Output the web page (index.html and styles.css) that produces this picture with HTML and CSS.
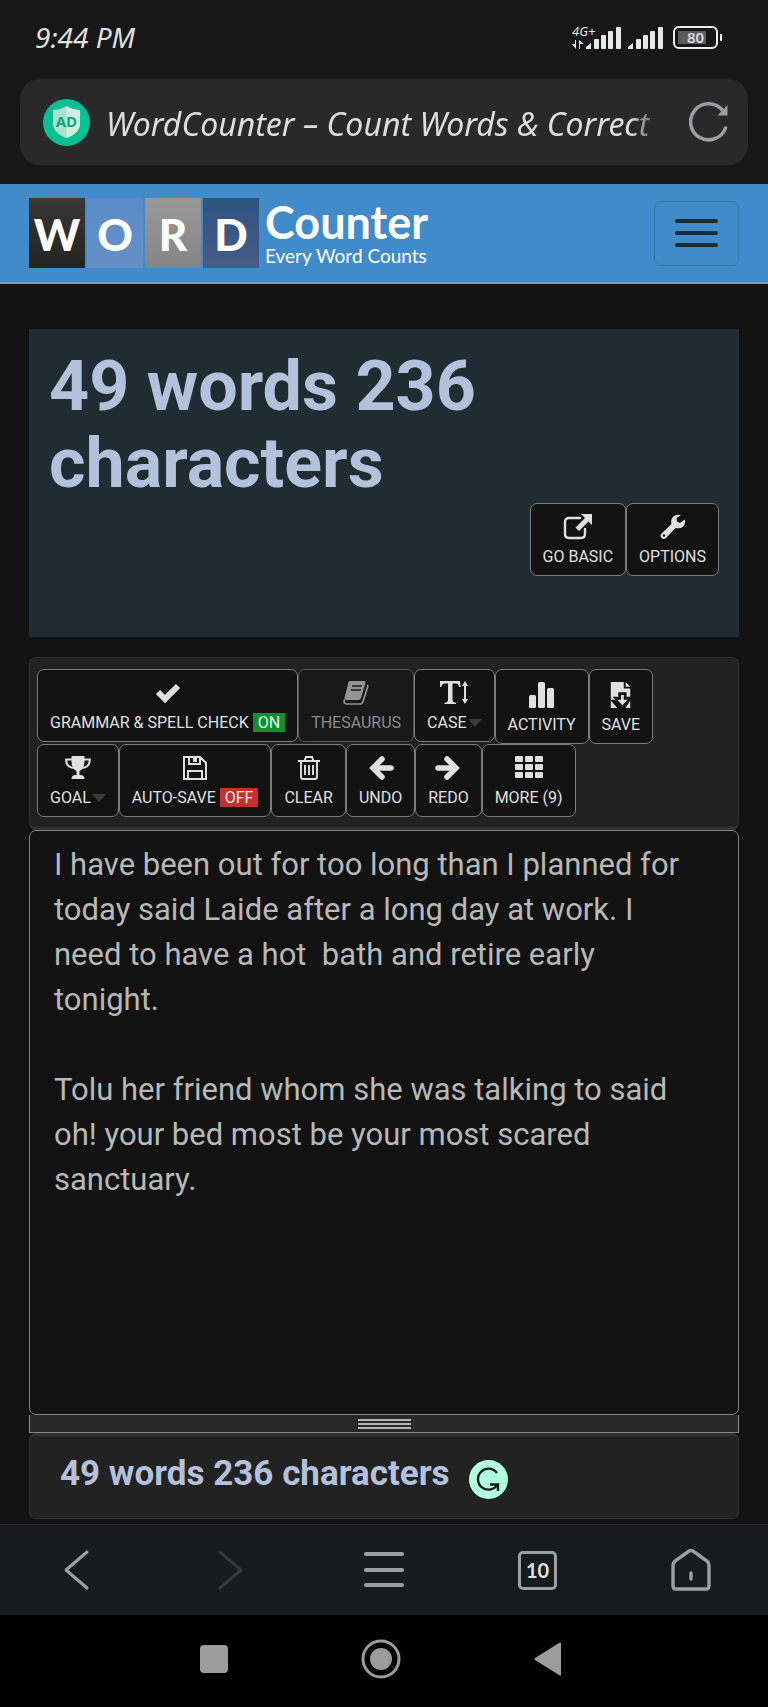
FILE: index.html
```html
<!DOCTYPE html>
<html lang="en">
<head>
<meta charset="utf-8">
<meta name="viewport" content="width=device-width, initial-scale=1">
<title>WordCounter – Count Words &amp; Correct Writing</title>
<link rel="stylesheet" href="styles.css">
</head>
<body>
<div class="status-bar">
  <time class="clock">9:44 PM</time>
  <div class="status-icons">
    <div class="network">
      <span class="network-type">4G+</span>
      <svg class="arrows" width="12" height="9" viewBox="0 0 12 9"><path d="M4 0v9L0 4h3V0zM7 9V0l5 4H8v5z" fill="#e8e8e8"/></svg>
    </div>
    <svg width="35" height="23" viewBox="0 0 35 23" fill="#e8e8e8"><path d="M0 23v-2l5-4v6z"/><rect x="8" y="13" width="5" height="10" rx="1"/><rect x="15" y="9" width="5" height="14" rx="1"/><rect x="22" y="5" width="5" height="18" rx="1"/><rect x="30" y="1" width="5" height="22" rx="1"/></svg>
    <svg class="signal-second" width="35" height="23" viewBox="0 0 35 23" fill="#e8e8e8"><path d="M0 23v-2l5-4v6z"/><rect x="8" y="13" width="5" height="10" rx="1"/><rect x="15" y="9" width="5" height="14" rx="1"/><rect x="22" y="5" width="5" height="18" rx="1"/><rect x="30" y="1" width="5" height="22" rx="1"/></svg>
    <div class="battery"><span class="battery-level">80</span></div>
  </div>
</div>

<div class="browser-top">
  <div class="address-bar">
    <span class="ad-badge">
      <svg width="47" height="47" viewBox="0 0 47 47"><circle cx="23.500" cy="23.500" r="23.500" fill="#0bbf94"/><path d="M23.500 7q6 4 13.500 4v13q0 10-13.500 15Q10 34 10 24V11q7.500 0 13.500-4z" fill="#a9e3cf"/><path d="M23.500 7q6 4 13.500 4v13q0 10-13.500 15z" fill="#cfeee2"/></svg>
      <span class="ad-label">AD</span>
    </span>
    <span class="page-title">WordCounter – Count Words &amp; Correct</span>
    <button class="reload" aria-label="Reload"><svg width="40" height="40" viewBox="0 0 40 40"><path d="M36.500 26A18 18 0 1 1 34 9" fill="none" stroke="#9c9ca2" stroke-width="3.600" stroke-linecap="round"/><path d="M38.500 3v10.500H28.500z" fill="#9c9ca2"/></svg></button>
  </div>
</div>

<header class="site-nav">
  <a class="logo" href="#" aria-label="WordCounter home">
    <span class="tile tile-w">W</span><span class="tile tile-o">O</span><span class="tile tile-r">R</span><span class="tile tile-d">D</span>
    <span class="logo-words"><span class="logo-name">Counter</span><span class="logo-tag">Every Word Counts</span></span>
  </a>
  <button class="menu-toggle" aria-label="Menu"><i></i><i></i><i></i></button>
</header>

<main class="page">
  <section class="summary">
    <h1 class="summary-title">49 words 236 characters</h1>
    <div class="summary-actions">
      <button class="tool"><svg width="30" height="26" viewBox="0 0 30 26"><path d="M17 4H6Q2 4 2 8v12q0 4 4 4h12q4 0 4-4v-5" fill="none" stroke="#e0e0e0" stroke-width="2.400" stroke-linecap="round"/><path d="M18 0h11v11l-3.500-3.500L16 17l-3.500-3.500L22 4z" fill="#e0e0e0"/></svg><span>GO BASIC</span></button>
      <button class="tool"><svg width="26" height="26" viewBox="0 0 26 26"><path d="M24.700 5.500 20 9l-3-1.500-.5-3.500 4.500-3Q15 0 12.500 3.500 10.500 6.500 11.500 10L1.500 19.500q-2 2.300 0 4.500 2.300 2 4.500 0L15.500 14q4.500 1.200 7.800-1.500 2.700-3 1.400-7z" fill="#e0e0e0"/><circle cx="4" cy="21.500" r="1.200" fill="#121212"/></svg><span>OPTIONS</span></button>
    </div>
  </section>

  <section class="editor">
    <div class="toolbar">
      <button class="tool"><svg width="26" height="26" viewBox="0 0 26 26"><path d="M3 12l7 7L23 6" fill="none" stroke="#e0e0e0" stroke-width="6"/></svg><span>GRAMMAR &amp; SPELL CHECK <b class="flag flag-on">ON</b></span></button>
      <button class="tool" disabled><svg width="26" height="26" viewBox="0 0 26 26"><path d="M7 1h14q2 0 1.500 2L18 18q-.6 2-2.500 2H3.500Q1 20 1.600 17.500L5.500 2Q6 1 7 1z" fill="#939393"/><path d="M24 5q1 .5.700 1.800L20 21.500Q19.200 24 17 24H4Q1 24 1 21.500 1 20 2 19.800" fill="none" stroke="#939393" stroke-width="1.700"/><path d="M9 6h10M8 10h10" stroke="#181818" stroke-width="1.600"/></svg><span>THESAURUS</span></button>
      <button class="tool"><svg width="28" height="26" viewBox="0 0 28 26"><path d="M0 1h20l.5 6H19q-.7-3.500-3-3.500h-3.500V20q0 2.500 3.500 2.800V24H4.500v-1.200Q8 22.500 8 20V3.500H4.500Q2 3.500 1.300 7H0zM22 6l3-5 3 5h-2v13h2l-3 5-3-5h2V6z" fill="#e0e0e0"/></svg><span class="with-caret">CASE<i class="caret"></i></span></button>
      <button class="tool tool-tall"><svg width="26" height="26" viewBox="0 0 26 26" fill="#e0e0e0"><rect x="0" y="13" width="7" height="13" rx="1.500"/><rect x="9" y="0" width="7" height="26" rx="1.500"/><rect x="18" y="6" width="7" height="20" rx="1.500"/></svg><span>ACTIVITY</span></button>
      <button class="tool tool-tall"><svg width="22" height="26" viewBox="0 0 22 28"><path d="M0 0h14v7h7v9h-4v-5H8v5H2l3 3H0zM16 0l5 5h-5zM0 20l7 8H0zM21 20v8h-5z" fill="#e0e0e0"/><path d="M11 14h3v5h4l-5.500 6L7 19h4z" fill="#e0e0e0"/></svg><span>SAVE</span></button>
      <button class="tool"><svg width="26" height="26" viewBox="0 0 26 26"><path d="M6.500 1h13v5q0 8-5 10v4h1q4 0 4 4h-13q0-4 4-4h1v-4q-5-2-5-10z" fill="#e0e0e0"/><path d="M7 4.500H1.200Q1 12 9 13M19 4.500h5.800Q25 12 17 13" fill="none" stroke="#e0e0e0" stroke-width="2"/></svg><span class="with-caret">GOAL<i class="caret"></i></span></button>
      <button class="tool"><svg width="26" height="26" viewBox="0 0 26 26"><path d="M2 2h16l6 6v16H2zM6 24v-8h14v8M7 2v7h11V2" fill="none" stroke="#e0e0e0" stroke-width="2"/><path d="M11 1h4v6h-4z" fill="#e0e0e0"/></svg><span>AUTO-SAVE <b class="flag flag-off">OFF</b></span></button>
      <button class="tool"><svg width="22" height="26" viewBox="0 0 22 26"><path d="M0 6h22M6.500 6l1.500-4h6l1.500 4M3 6v16q0 2 2 2h12q2 0 2-2V6M7 10v10M11 10v10M15 10v10" fill="none" stroke="#e0e0e0" stroke-width="1.900"/></svg><span>CLEAR</span></button>
      <button class="tool"><svg width="26" height="26" viewBox="0 0 26 26"><path d="M14 4l-9 9 9 9M6 13h17" fill="none" stroke="#e0e0e0" stroke-width="5.500" stroke-linecap="round"/></svg><span>UNDO</span></button>
      <button class="tool"><svg width="26" height="26" viewBox="0 0 26 26"><path d="M12 4l9 9-9 9M20 13H3" fill="none" stroke="#e0e0e0" stroke-width="5.500" stroke-linecap="round"/></svg><span>REDO</span></button>
      <button class="tool"><svg width="28" height="26" viewBox="0 0 28 26" fill="#e0e0e0"><rect x="0" y="1" width="8" height="6" rx="1"/><rect x="10" y="1" width="8" height="6" rx="1"/><rect x="20" y="1" width="8" height="6" rx="1"/><rect x="0" y="9" width="8" height="6" rx="1"/><rect x="10" y="9" width="8" height="6" rx="1"/><rect x="20" y="9" width="8" height="6" rx="1"/><rect x="0" y="17" width="8" height="6" rx="1"/><rect x="10" y="17" width="8" height="6" rx="1"/><rect x="20" y="17" width="8" height="6" rx="1"/></svg><span>MORE (9)</span></button>
    </div>
    <textarea class="text-box" aria-label="Text" spellcheck="false">I have been out for too long than I planned for today said Laide after a long day at work. I need to have a hot  bath and retire early tonight.

Tolu her friend whom she was talking to said oh! your bed most be your most scared sanctuary.</textarea>
    <div class="grip"><i></i><i></i><i></i></div>
    <footer class="counts">
      <span class="counts-text">49 words 236 characters</span>
      <svg class="grammarly" width="39" height="39" viewBox="0 0 39 39"><circle cx="19.500" cy="19.500" r="19.500" fill="#b2ffe4"/><path d="M28 13A10.500 10.500 0 1 0 28.500 24.500H21M29 31v-6.500h-2" fill="none" stroke="#101c18" stroke-width="2.400"/></svg>
    </footer>
  </section>
</main>

<nav class="browser-nav">
  <button aria-label="Back"><svg width="42" height="42" viewBox="0 0 42 42"><path d="M31 3 10 21l21 18" fill="none" stroke="#9aa0a5" stroke-width="3" stroke-linecap="round" stroke-linejoin="round"/></svg></button>
  <button aria-label="Forward"><svg width="42" height="42" viewBox="0 0 42 42"><path d="M11 3l21 18-21 18" fill="none" stroke="#34383b" stroke-width="3" stroke-linecap="round" stroke-linejoin="round"/></svg></button>
  <button aria-label="Menu"><svg width="42" height="42" viewBox="0 0 42 42"><path d="M3 5h36M3 21h36M3 36h36" stroke="#9aa0a5" stroke-width="4" stroke-linecap="round"/></svg></button>
  <button class="tabs" aria-label="Tabs"><span class="tab-count">10</span></button>
  <button aria-label="Home"><svg width="42" height="44" viewBox="0 0 42 44"><path d="M3 17q0-2 2-4L19 3q2-1 4 0l14 10q2 2 2 4v21q0 3-3 3H6q-3 0-3-3z" fill="none" stroke="#9aa0a5" stroke-width="3.400"/><path d="M21 25v6" stroke="#9aa0a5" stroke-width="3.400" stroke-linecap="round"/></svg></button>
</nav>
<nav class="system-nav">
  <button aria-label="Recent apps"><svg width="40" height="40" viewBox="0 0 40 40"><rect x="6" y="6" width="28" height="28" rx="4" fill="#9c9c9c"/></svg></button>
  <button aria-label="Home screen"><svg width="40" height="40" viewBox="0 0 40 40"><circle cx="20" cy="20" r="18" fill="none" stroke="#9c9c9c" stroke-width="3"/><circle cx="20" cy="20" r="11" fill="#9c9c9c"/></svg></button>
  <button aria-label="System back"><svg width="40" height="40" viewBox="0 0 40 40"><path d="M33 4v32q0 1-2 0L7 21q-1-1 0-2L31 4q2-1 2 0z" fill="#9c9c9c"/></svg></button>
</nav>
</body>
</html>
```

FILE: styles.css
```css
* { box-sizing: border-box; }

body {
  margin: 0;
  background: #121212;
  color: #e0e0e0;
  font-family: Roboto, sans-serif;
}

button {
  margin: 0;
  padding: 0;
  border: 0;
  background: none;
  color: inherit;
  font: inherit;
}

svg { display: block; flex: none; }

/* Phone status bar */
.status-bar {
  display: flex;
  justify-content: space-between;
  align-items: center;
  height: 79px;
  padding: 0 46px 6px 35px;
  background: #171717;
}
.clock { font: italic 28px "Noto Sans", sans-serif; }
.status-icons { display: flex; align-items: flex-end; }
.network { display: flex; flex-direction: column; gap: 2px; width: 14px; }
.network-type { font: italic 13px/13px "Noto Sans", sans-serif; white-space: nowrap; }
.signal-second { margin-left: 7px; }
.battery {
  position: relative;
  width: 45px;
  height: 23px;
  margin: 0 4px 0 10px;
  padding: 3px;
  border: 2px solid #eee;
  border-radius: 6px;
}
.battery::after {
  content: "";
  position: absolute;
  right: -6px;
  top: 6px;
  width: 2px;
  height: 7px;
  background: #eee;
}
.battery-level {
  display: block;
  height: 13px;
  background: linear-gradient(90deg, #5c5c5c 80%, transparent 80%);
  font: 600 15px/13px "Open Sans", sans-serif;
  text-align: center;
}

/* Browser address bar */
.browser-top { padding: 0 20px 19px; background: #171717; }
.address-bar {
  display: flex;
  align-items: center;
  height: 86px;
  padding: 0 19px 0 23px;
  border-radius: 20px;
  background: #292929;
}
.ad-badge { position: relative; margin-right: 16px; }
.ad-label {
  position: absolute;
  inset: 0;
  font: bold 15px/45px "Open Sans", sans-serif;
  color: #12a377;
  text-align: center;
}
.page-title {
  overflow: hidden;
  padding-top: 4px;
  font: italic 32px/44px "Noto Sans", sans-serif;
  color: #ddd;
  white-space: nowrap;
  mask-image: linear-gradient(90deg, #000 calc(100% - 20px), rgba(0, 0, 0, 0.4));
}
.reload { margin-left: auto; }

/* Site header */
.site-nav {
  display: flex;
  justify-content: space-between;
  align-items: center;
  height: 100px;
  padding: 0 29px;
  border-bottom: 2px solid #6fa3d3;
  background: #428bca;
}
.logo {
  display: flex;
  gap: 2px;
  color: #fff;
  font-family: Lato, sans-serif;
  text-decoration: none;
}
.tile {
  width: 56px;
  height: 70px;
  font-size: 44px;
  font-weight: 900;
  line-height: 72px;
  text-align: center;
}
.tile-w { background: linear-gradient(#383838, #222); }
.tile-o { background: linear-gradient(#5a8bc8, #6590c4); }
.tile-r { background: linear-gradient(#999, #858585); }
.tile-d { background: linear-gradient(#2d5480, #485b87); }
.logo-words { display: flex; flex-direction: column; margin-left: 4px; }
.logo-name { font-size: 45px; font-weight: 700; line-height: 48px; }
.logo-tag { font-size: 19px; line-height: 20px; }
.menu-toggle {
  display: flex;
  flex-direction: column;
  align-items: center;
  justify-content: center;
  gap: 8px;
  width: 85px;
  height: 65px;
  border: 1px solid #3a76aa;
  border-radius: 7px;
}
.menu-toggle i { width: 43px; height: 4px; border-radius: 2px; background: #182a36; }

/* Content */
.page { padding: 45px 29px 5px; }
.summary { margin-bottom: 20px; padding: 19px 20px 61px; background: #1f2d33; }
.summary-title {
  margin: 0;
  max-width: 500px;
  color: #b4c1dd;
  font-size: 70px;
  font-weight: 700;
  line-height: 77px;
}
.summary-actions { display: flex; justify-content: flex-end; padding-top: 1px; }

.tool {
  display: flex;
  flex-direction: column;
  align-items: center;
  gap: 5px;
  height: 73px;
  padding: 10px 12px 0;
  border: 1px solid #7c7c7c;
  border-radius: 7px;
  background: #121212;
  color: #e0e0e0;
  font-size: 16px;
  line-height: 24px;
  white-space: nowrap;
}
.tool:disabled { background: #181818; color: #8c8c8c; border-color: #555; }
.tool-tall { height: 75px; padding-top: 12px; }
.flag { display: inline-block; padding: 0 5px; font-weight: 400; line-height: 19px; color: #eee; }
.flag-on { background: #0a9130; }
.flag-off { background: #c52f2f; }
.with-caret { display: flex; align-items: center; gap: 1px; }
.caret {
  border: 7px solid transparent;
  border-top: 8px solid #3a3a3a;
  border-bottom: 0;
}

.toolbar {
  display: flex;
  flex-wrap: wrap;
  align-items: flex-start;
  padding: 11px 7px 10px;
  border: 1px solid #303030;
  border-bottom: 3px solid #333;
  border-radius: 7px;
  background: #222;
}
.text-box {
  display: block;
  width: 100%;
  height: 585px;
  margin: 0;
  padding: 11px 40px 11px 24px;
  border: 1px solid #828282;
  border-radius: 7px;
  outline: 0;
  background: #121212;
  color: #b8b8b8;
  font: 31px/45px Roboto, sans-serif;
  resize: none;
}
.grip {
  display: flex;
  flex-direction: column;
  align-items: center;
  justify-content: center;
  gap: 2px;
  height: 18px;
  border: 1px solid #8a8a8a;
  border-top: 0;
  background: #282828;
}
.grip i { width: 53px; height: 2px; background: #b5b5b5; }
.counts {
  display: flex;
  align-items: center;
  gap: 20px;
  height: 86px;
  padding: 4px 30px 0;
  border: 1px solid #333;
  border-top: 3px solid #303230;
  border-radius: 7px;
  background: #222;
}
.counts-text { padding-bottom: 10px; color: #b4c1dd; font-size: 35px; font-weight: 700; line-height: 42px; }

/* Browser and system navigation */
.browser-nav {
  display: grid;
  grid-template-columns: repeat(5, 1fr);
  align-items: center;
  justify-items: center;
  height: 91px;
  border-top: 1px solid #2a2d2f;
  background: #171b1e;
}
.tab-count {
  display: block;
  width: 39px;
  height: 39px;
  border: 3px solid #9aa0a5;
  border-radius: 5px;
  font: bold 20px/33px Lato, sans-serif;
  text-align: center;
}
.system-nav {
  display: flex;
  justify-content: center;
  gap: 127px;
  height: 92px;
  padding: 0 6px 4px 0;
  background: #000;
}
```
